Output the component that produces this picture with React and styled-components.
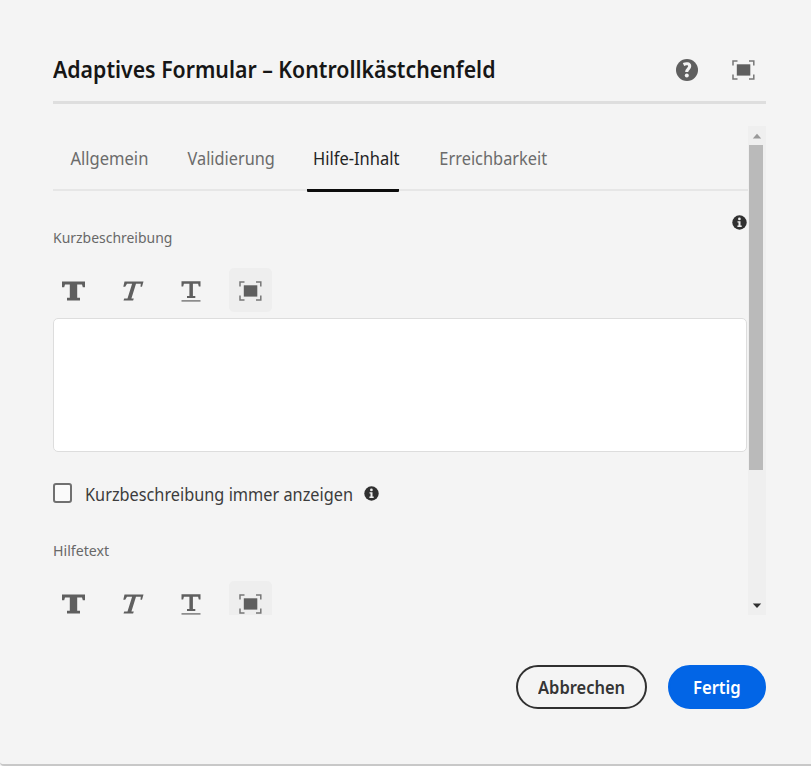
import React from 'react';
import styled, { createGlobalStyle } from 'styled-components';

const GlobalStyle = createGlobalStyle`
  * { box-sizing: border-box; }
  body { margin: 0; background: #f4f4f4; font-family: "Noto Sans", "Open Sans", sans-serif; }
  button { font-family: inherit; padding: 0; border: 0; background: none; }
`;

/* Narrows the typeface; the box keeps its natural width. */
const Condensed = styled.span`
  display: inline-block;
  transform: scaleX(${(p) => p.$ratio});
  transform-origin: ${(p) => (p.$centered ? 'center' : 'left')} center;
  white-space: nowrap;
`;

const Dialog = styled.main`
  display: flex;
  flex-direction: column;
  width: 811px;
  height: 766px;
  padding: 38px 45px 0 53px;
  background: #f4f4f4;
  border-bottom: 2px solid #c8c8c8;
  border-bottom-left-radius: 4px;
  overflow: hidden;
`;

const Header = styled.header`
  display: flex;
  align-items: center;
  height: 66px;
  padding: 0 11px 0 0;
  border-bottom: 3px solid #dedede;
`;

const Title = styled.h1`
  flex: 1;
  margin: 0 0 2px;
  color: #161616;
  font-size: 23px;
  font-weight: 600;
  line-height: 30px;
  white-space: nowrap;
`;

const HeaderActions = styled.div`
  display: flex;
  align-items: center;
  gap: 34px;
  svg { display: block; }
`;

const Viewport = styled.section`
  display: grid;
  grid-template-columns: 695px 18px;
  height: 489px;
  margin-top: 22px;
  overflow: hidden;
`;

const Content = styled.div`
  display: flex;
  flex-direction: column;
  min-width: 0;
  height: 489px;
  overflow: hidden;
`;

const Tabs = styled.nav`
  display: flex;
  flex: none;
  gap: 25px;
  height: 65px;
  padding-left: 10px;
  border-bottom: 2px solid #e6e6e6;
`;

const Tab = styled.button`
  display: flex;
  align-items: center;
  justify-content: center;
  width: ${(p) => p.$width}px;
  height: 66px;
  padding: 1px 0 0 ${(p) => p.$inset || 0}px;
  border-bottom: 3px solid ${(p) => (p.$active ? '#0c0c0c' : 'transparent')};
  border-radius: 1px;
  color: ${(p) => (p.$active ? '#242424' : '#6b6b6b')};
  font-size: 18px;
`;

const FieldHead = styled.div`
  display: flex;
  flex: none;
  justify-content: space-between;
  height: ${(p) => p.$height}px;
  padding: ${(p) => p.$top}px 1px 0 0;
`;

const Label = styled.label`
  margin-top: ${(p) => p.$offset}px;
  color: #686868;
  font-size: 15px;
  line-height: 20px;
`;

const Toolbar = styled.div`
  display: flex;
  flex: none;
  gap: 15px;
  height: 44px;
  margin-left: -1px;
`;

const Tool = styled.button`
  display: grid;
  place-items: center;
  width: 43.5px;
  height: 44px;
  padding-top: 1px;
  border-radius: 5px;
  svg { display: block; }
  &:last-child {
    width: 43px;
    margin-left: 1.5px;
    padding-right: 1px;
    background: #eeeeee;
  }
`;

const Editor = styled.div`
  flex: none;
  width: 694px;
  height: 134px;
  margin-top: 6px;
  border: 1px solid #dddddd;
  border-radius: 5px;
  background: #fff;
`;

const CheckRow = styled.div`
  display: flex;
  flex: none;
  align-items: center;
  height: 24px;
  margin-top: 29px;
`;

const CheckBox = styled.span`
  width: 19px;
  height: 20px;
  border: 2px solid #707070;
  border-radius: 3px;
  background: #fafafa;
`;

const CheckText = styled.span`
  width: 267px;
  margin: 1px 12px 0 13px;
  color: #3c3c3c;
  font-size: 18px;
  line-height: 24px;
  white-space: nowrap;
`;

const ScrollTrack = styled.div`
  display: flex;
  flex-direction: column;
  align-items: center;
  background: #efefef;
  svg { display: block; flex: none; }
`;

const Thumb = styled.div`
  width: 14px;
  height: 325px;
  margin: 0 2px auto 0;
  background: #bababa;
`;

const Footer = styled.footer`
  display: flex;
  justify-content: flex-end;
  gap: 21px;
  margin-top: 50px;
`;

const Action = styled.button`
  display: flex;
  align-items: center;
  justify-content: center;
  width: ${(p) => p.$width}px;
  height: 44px;
  border: 2px solid ${(p) => (p.$primary ? '#0265e6' : '#303030')};
  border-radius: 22px;
  background: ${(p) => (p.$primary ? '#0265e6' : 'transparent')};
  color: ${(p) => (p.$primary ? '#fff' : '#353535')};
  font-size: 18px;
  font-weight: 600;
`;

const HelpIcon = () => (
  <svg width="22" height="22" viewBox="0 0 22 22">
    <circle cx="11" cy="11" r="11" fill="#5f5f5f" />
    <path d="M7.500 5.500C10.600 4 13.700 4.700 13.700 7.300c0 2.400-3 2.700-3 5.600" fill="none" stroke="#f4f4f4" strokeWidth="3.100" />
    <circle cx="10.800" cy="16.500" r="2" fill="#f4f4f4" />
  </svg>
);

const FullscreenIcon = () => (
  <svg width="23" height="20" viewBox="0 0 23 20">
    <path d="M1 5.500V1h4.500M17 1h4.800v4.500M21.800 14.500V19H17M5.500 19H1v-4.500" fill="none" stroke="#777" strokeWidth="1.500" />
    <rect x="4.800" y="4.300" width="13.500" height="11.300" fill="#5f5f5f" />
  </svg>
);

const InfoIcon = () => (
  <svg width="15" height="15" viewBox="0 0 15 15">
    <circle cx="7.500" cy="7.500" r="7.200" fill="#303030" />
    <circle cx="7.400" cy="3.900" r="1.350" fill="#eee" />
    <path d="M5.500 6.200h3v4.400h1.200V12H5.400v-1.400h1.100V7.600h-1z" fill="#eee" />
  </svg>
);

const BoldIcon = () => (
  <svg width="23" height="20" viewBox="0 0 23 20">
    <path d="M0 0.500h23v5.700h-2.200l-.8-2.700h-4.800v13.200h2.800v2.800H5v-2.800h2.800V3.500H3L2.200 6.200H0z" fill="#5f5f5f" />
  </svg>
);

const ItalicIcon = () => (
  <svg width="23" height="20" viewBox="0 0 23 20">
    <path d="M3.500 0.500h19l-1.500 5.200h-1.500l.3-3h-4.800l-4.600 14.700h2.400l-.7 2.100H2.500l.7-2.100h3.300l4.600-14.700H6L4.200 5.700H2.300z" fill="#5f5f5f" />
  </svg>
);

const UnderlineIcon = () => (
  <svg width="20" height="22" viewBox="0 0 20 22">
    <path d="M0.500 1.300h19v5.200h-1.700l-.7-2.800h-5.200v12.200h2.400v2.200H6v-2.200h2.400V3.700H2.900L2.200 6.500H.5z" fill="#5f5f5f" />
    <path d="M.5 20.900h19" stroke="#6b6b6b" strokeWidth="1.300" />
  </svg>
);

const Arrow = ({ down }) => (
  <svg width="18" height="19" viewBox="0 0 18 19">
    <path d={down ? 'M4.800 7.500h8.400L9 12z' : 'M4.800 12.500h8.400L9 7.800z'} fill={down ? '#303030' : '#999'} />
  </svg>
);

const FormatBar = () => (
  <Toolbar>
    <Tool aria-label="Fett"><BoldIcon /></Tool>
    <Tool aria-label="Kursiv"><ItalicIcon /></Tool>
    <Tool aria-label="Unterstrichen"><UnderlineIcon /></Tool>
    <Tool aria-label="Vollbild"><FullscreenIcon /></Tool>
  </Toolbar>
);

export default function App() {
  return (
    <>
      <GlobalStyle />
      <Dialog>
        <Header>
          <Title><Condensed $ratio={0.925}>Adaptives Formular – Kontrollkästchenfeld</Condensed></Title>
          <HeaderActions>
            <HelpIcon />
            <FullscreenIcon />
          </HeaderActions>
        </Header>
        <Viewport>
          <Content>
            <Tabs>
              <Tab $width={92}><Condensed $ratio={0.92} $centered>Allgemein</Condensed></Tab>
              <Tab $width={102}><Condensed $ratio={0.905} $centered>Validierung</Condensed></Tab>
              <Tab $width={92} $inset={7} $active><Condensed $ratio={0.915} $centered>Hilfe-Inhalt</Condensed></Tab>
              <Tab $width={138}><Condensed $ratio={0.91} $centered>Erreichbarkeit</Condensed></Tab>
            </Tabs>
            <FieldHead $height={77} $top={24}>
              <Label $offset={12}><Condensed $ratio={0.93}>Kurzbeschreibung</Condensed></Label>
              <InfoIcon />
            </FieldHead>
            <FormatBar />
            <Editor />
            <CheckRow>
              <CheckBox />
              <CheckText><Condensed $ratio={0.905}>Kurzbeschreibung immer anzeigen</Condensed></CheckText>
              <InfoIcon />
            </CheckRow>
            <FieldHead $height={76} $top={35}>
              <Label $offset={0}><Condensed $ratio={0.945}>Hilfetext</Condensed></Label>
            </FieldHead>
            <FormatBar />
          </Content>
          <ScrollTrack>
            <Arrow />
            <Thumb />
            <Arrow down />
          </ScrollTrack>
        </Viewport>
        <Footer>
          <Action $width={131}><Condensed $ratio={0.915} $centered>Abbrechen</Condensed></Action>
          <Action $width={98} $primary><Condensed $ratio={0.925} $centered>Fertig</Condensed></Action>
        </Footer>
      </Dialog>
    </>
  );
}
